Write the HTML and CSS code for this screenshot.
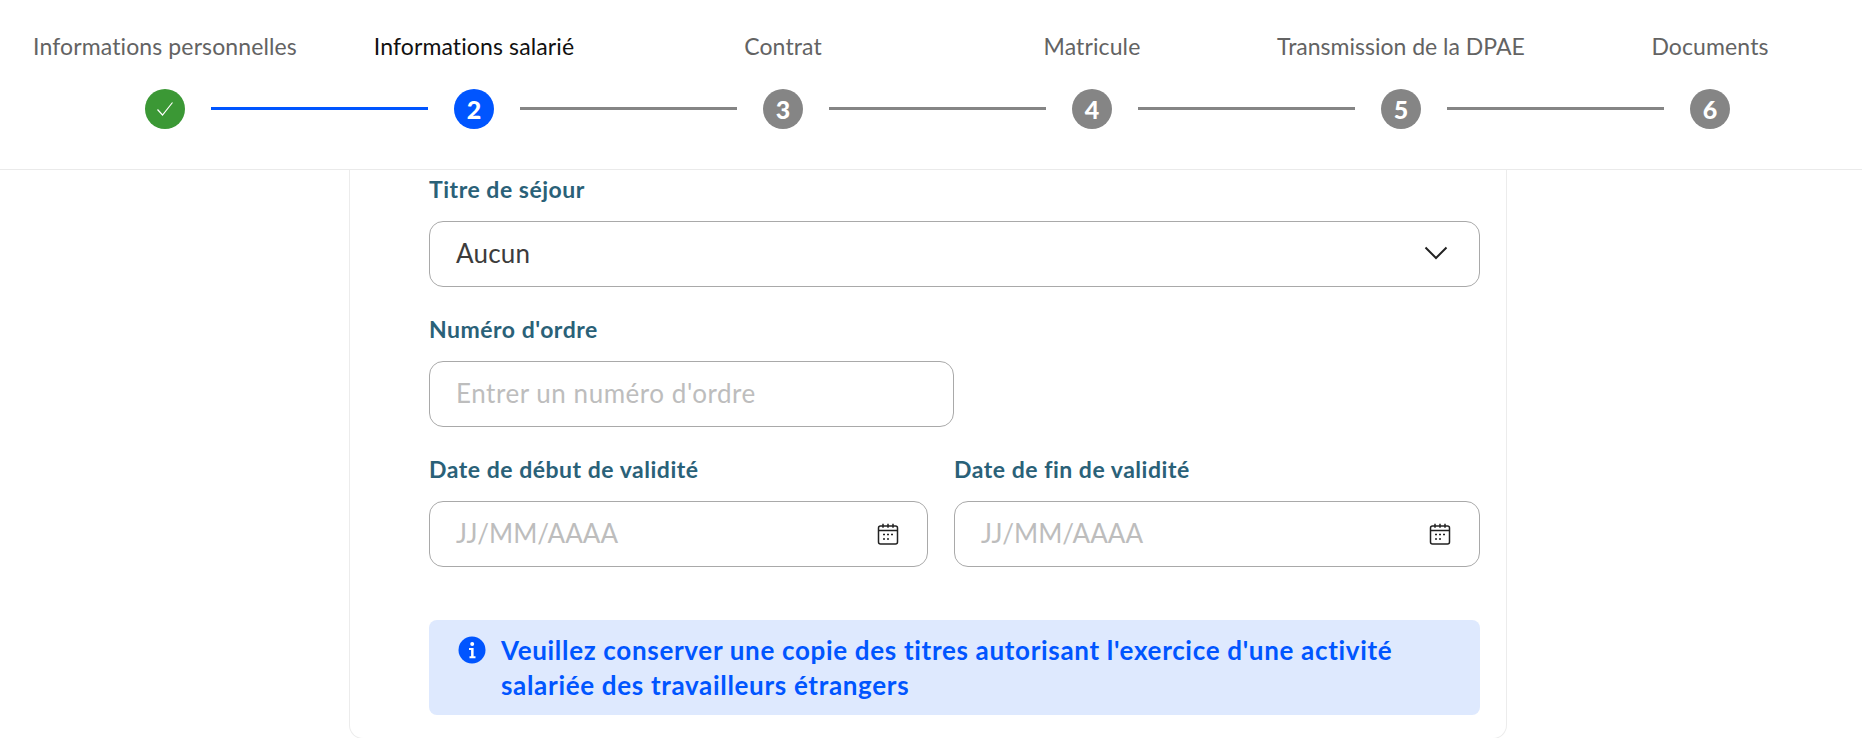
FILE: index.html
```html
<!DOCTYPE html>
<html lang="fr">
<head>
<meta charset="utf-8">
<title>Informations salarié</title>
<link rel="stylesheet" href="styles.css">
</head>
<body>
<header class="stepper">
  <div class="labels">
    <span class="label">Informations personnelles</span>
    <span class="label label-active">Informations salarié</span>
    <span class="label">Contrat</span>
    <span class="label">Matricule</span>
    <span class="label label-tight">Transmission de la DPAE</span>
    <span class="label">Documents</span>
  </div>
  <div class="track">
    <span class="dot dot-done"><svg width="20" height="20" viewBox="0 0 20 20" fill="none"><path d="M2.500 10.500 7.500 16 17.500 3.500" stroke="#fff" stroke-width="1.200"/></svg></span>
    <span class="line line-active"></span>
    <span class="dot dot-active">2</span>
    <span class="line"></span>
    <span class="dot">3</span>
    <span class="line"></span>
    <span class="dot">4</span>
    <span class="line"></span>
    <span class="dot">5</span>
    <span class="line"></span>
    <span class="dot">6</span>
  </div>
</header>
<main class="page">
  <section class="card">
    <div class="field">
      <label class="field-label">Titre de séjour</label>
      <div class="input input-select">
        <span class="value">Aucun</span>
        <svg class="chevron" width="24" height="14" viewBox="0 0 24 14" fill="none"><path d="M1.500 1.500 12 12 22.500 1.500" stroke="#222" stroke-width="2"/></svg>
      </div>
    </div>
    <div class="row">
      <div class="field col col-spaced">
        <label class="field-label">Numéro d'ordre</label>
        <div class="input"><span class="placeholder placeholder-text">Entrer un numéro d'ordre</span></div>
      </div>
    </div>
    <div class="row">
      <div class="field col col-spaced">
        <label class="field-label">Date de début de validité</label>
        <div class="input">
          <span class="placeholder">JJ/MM/AAAA</span>
          <svg class="cal" width="22" height="22" viewBox="0 0 22 22" fill="none"><rect x="1.500" y="3" width="19" height="18" rx="2" stroke="#222" stroke-width="1.500"/><path d="M1.500 7.500h19M6 .8v4M11 .8v4M16 .8v4" stroke="#222" stroke-width="1.500"/><path d="M6 11.500h2M10 11.500h2M14 11.500h2M6 16h2M10 16h2" stroke="#222" stroke-width="1.600"/></svg>
        </div>
      </div>
      <div class="field col">
        <label class="field-label">Date de fin de validité</label>
        <div class="input">
          <span class="placeholder">JJ/MM/AAAA</span>
          <svg class="cal" width="22" height="22" viewBox="0 0 22 22" fill="none"><rect x="1.500" y="3" width="19" height="18" rx="2" stroke="#222" stroke-width="1.500"/><path d="M1.500 7.500h19M6 .8v4M11 .8v4M16 .8v4" stroke="#222" stroke-width="1.500"/><path d="M6 11.500h2M10 11.500h2M14 11.500h2M6 16h2M10 16h2" stroke="#222" stroke-width="1.600"/></svg>
        </div>
      </div>
    </div>
    <div class="alert">
      <svg class="alert-icon" width="28" height="28" viewBox="0 0 28 28"><circle cx="14" cy="14" r="13.500" fill="#0055ff"/><circle cx="14.200" cy="7.900" r="2" fill="#fff"/><path d="M11 12h4.600v8.200H17.500v2h-6v-2h1.600v-6.200H11z" fill="#fff"/></svg>
      <p class="alert-text">Veuillez conserver une copie des titres autorisant l'exercice d'une activité salariée des travailleurs étrangers</p>
    </div>
  </section>
</main>
</body>
</html>
```

FILE: styles.css
```css
* { box-sizing: border-box; }
html, body { margin: 0; height: 100%; }
body {
  background: #fff;
  font-family: Lato, "Liberation Sans", sans-serif;
  overflow: hidden;
}
.stepper {
  height: 170px;
  padding: 31px 0 0 10.5px;
  border-bottom: 1px solid #eaeaea;
  overflow: hidden;
}
.labels {
  display: grid;
  grid-template-columns: repeat(6, 309px);
  height: 58px;
}
.label {
  font-size: 23px;
  line-height: 30px;
  letter-spacing: 0.12px;
  color: #636363;
  text-align: center;
  white-space: nowrap;
}
.label-active { color: #111; }
.label-tight { letter-spacing: 0; }
.track {
  display: flex;
  align-items: center;
  gap: 26px;
  padding-left: 134px;
}
.dot {
  width: 40px;
  height: 40px;
  flex: none;
  padding-left: 1px;
  border-radius: 50%;
  background: #858585;
  color: #fff;
  font-size: 25px;
  font-weight: 900;
  display: flex;
  align-items: center;
  justify-content: center;
}
.dot-done { background: #3b9835; padding-left: 0; }
.dot-active { background: #0055ff; }
.line {
  width: 217px;
  height: 3px;
  flex: none;
  margin-bottom: 2px;
  background: #858585;
}
.line-active { background: #0055ff; }
.page {
  display: flex;
  padding-left: 349px;
}
.card {
  width: 1158px;
  height: 569px;
  padding: 0 26px 0 79px;
  border: 1px solid #ececec;
  border-top: 0;
  border-radius: 0 0 14px 14px;
}
.field-label {
  display: block;
  height: 51px;
  padding-top: 4px;
  font-size: 23px;
  line-height: 30px;
  letter-spacing: 0.52px;
  font-weight: 700;
  color: #2a6178;
}
.field { padding-bottom: 23px; }
.input {
  height: 66px;
  padding: 0 26px 2px;
  display: flex;
  align-items: center;
  justify-content: space-between;
  border: 1px solid #a9a9a9;
  border-radius: 14px;
  font-size: 26px;
}
.input-select { padding-right: 31px; }
.value { color: #3c3c3c; letter-spacing: 0.2px; }
.placeholder { color: #bdbdbd; }
.placeholder-text { letter-spacing: 0.54px; }
.row { display: flex; width: 1051px; }
.col { width: 526px; }
.col-spaced { width: 525px; }
.row .col-spaced:not(:last-child) { padding-right: 26px; }
.cal { margin-right: 2px; margin-top: 2px; }
.alert {
  width: 1051px;
  height: 95px;
  margin-top: 30px;
  padding: 13px 24px 0 29px;
  display: flex;
  gap: 15px;
  background: #dee9fe;
  border-radius: 8px;
}
.alert-icon { flex: none; margin-top: 3px; }
.alert-text {
  margin: 0;
  font-size: 26px;
  line-height: 35px;
  letter-spacing: 0.68px;
  font-weight: 700;
  color: #0055ff;
}
```
